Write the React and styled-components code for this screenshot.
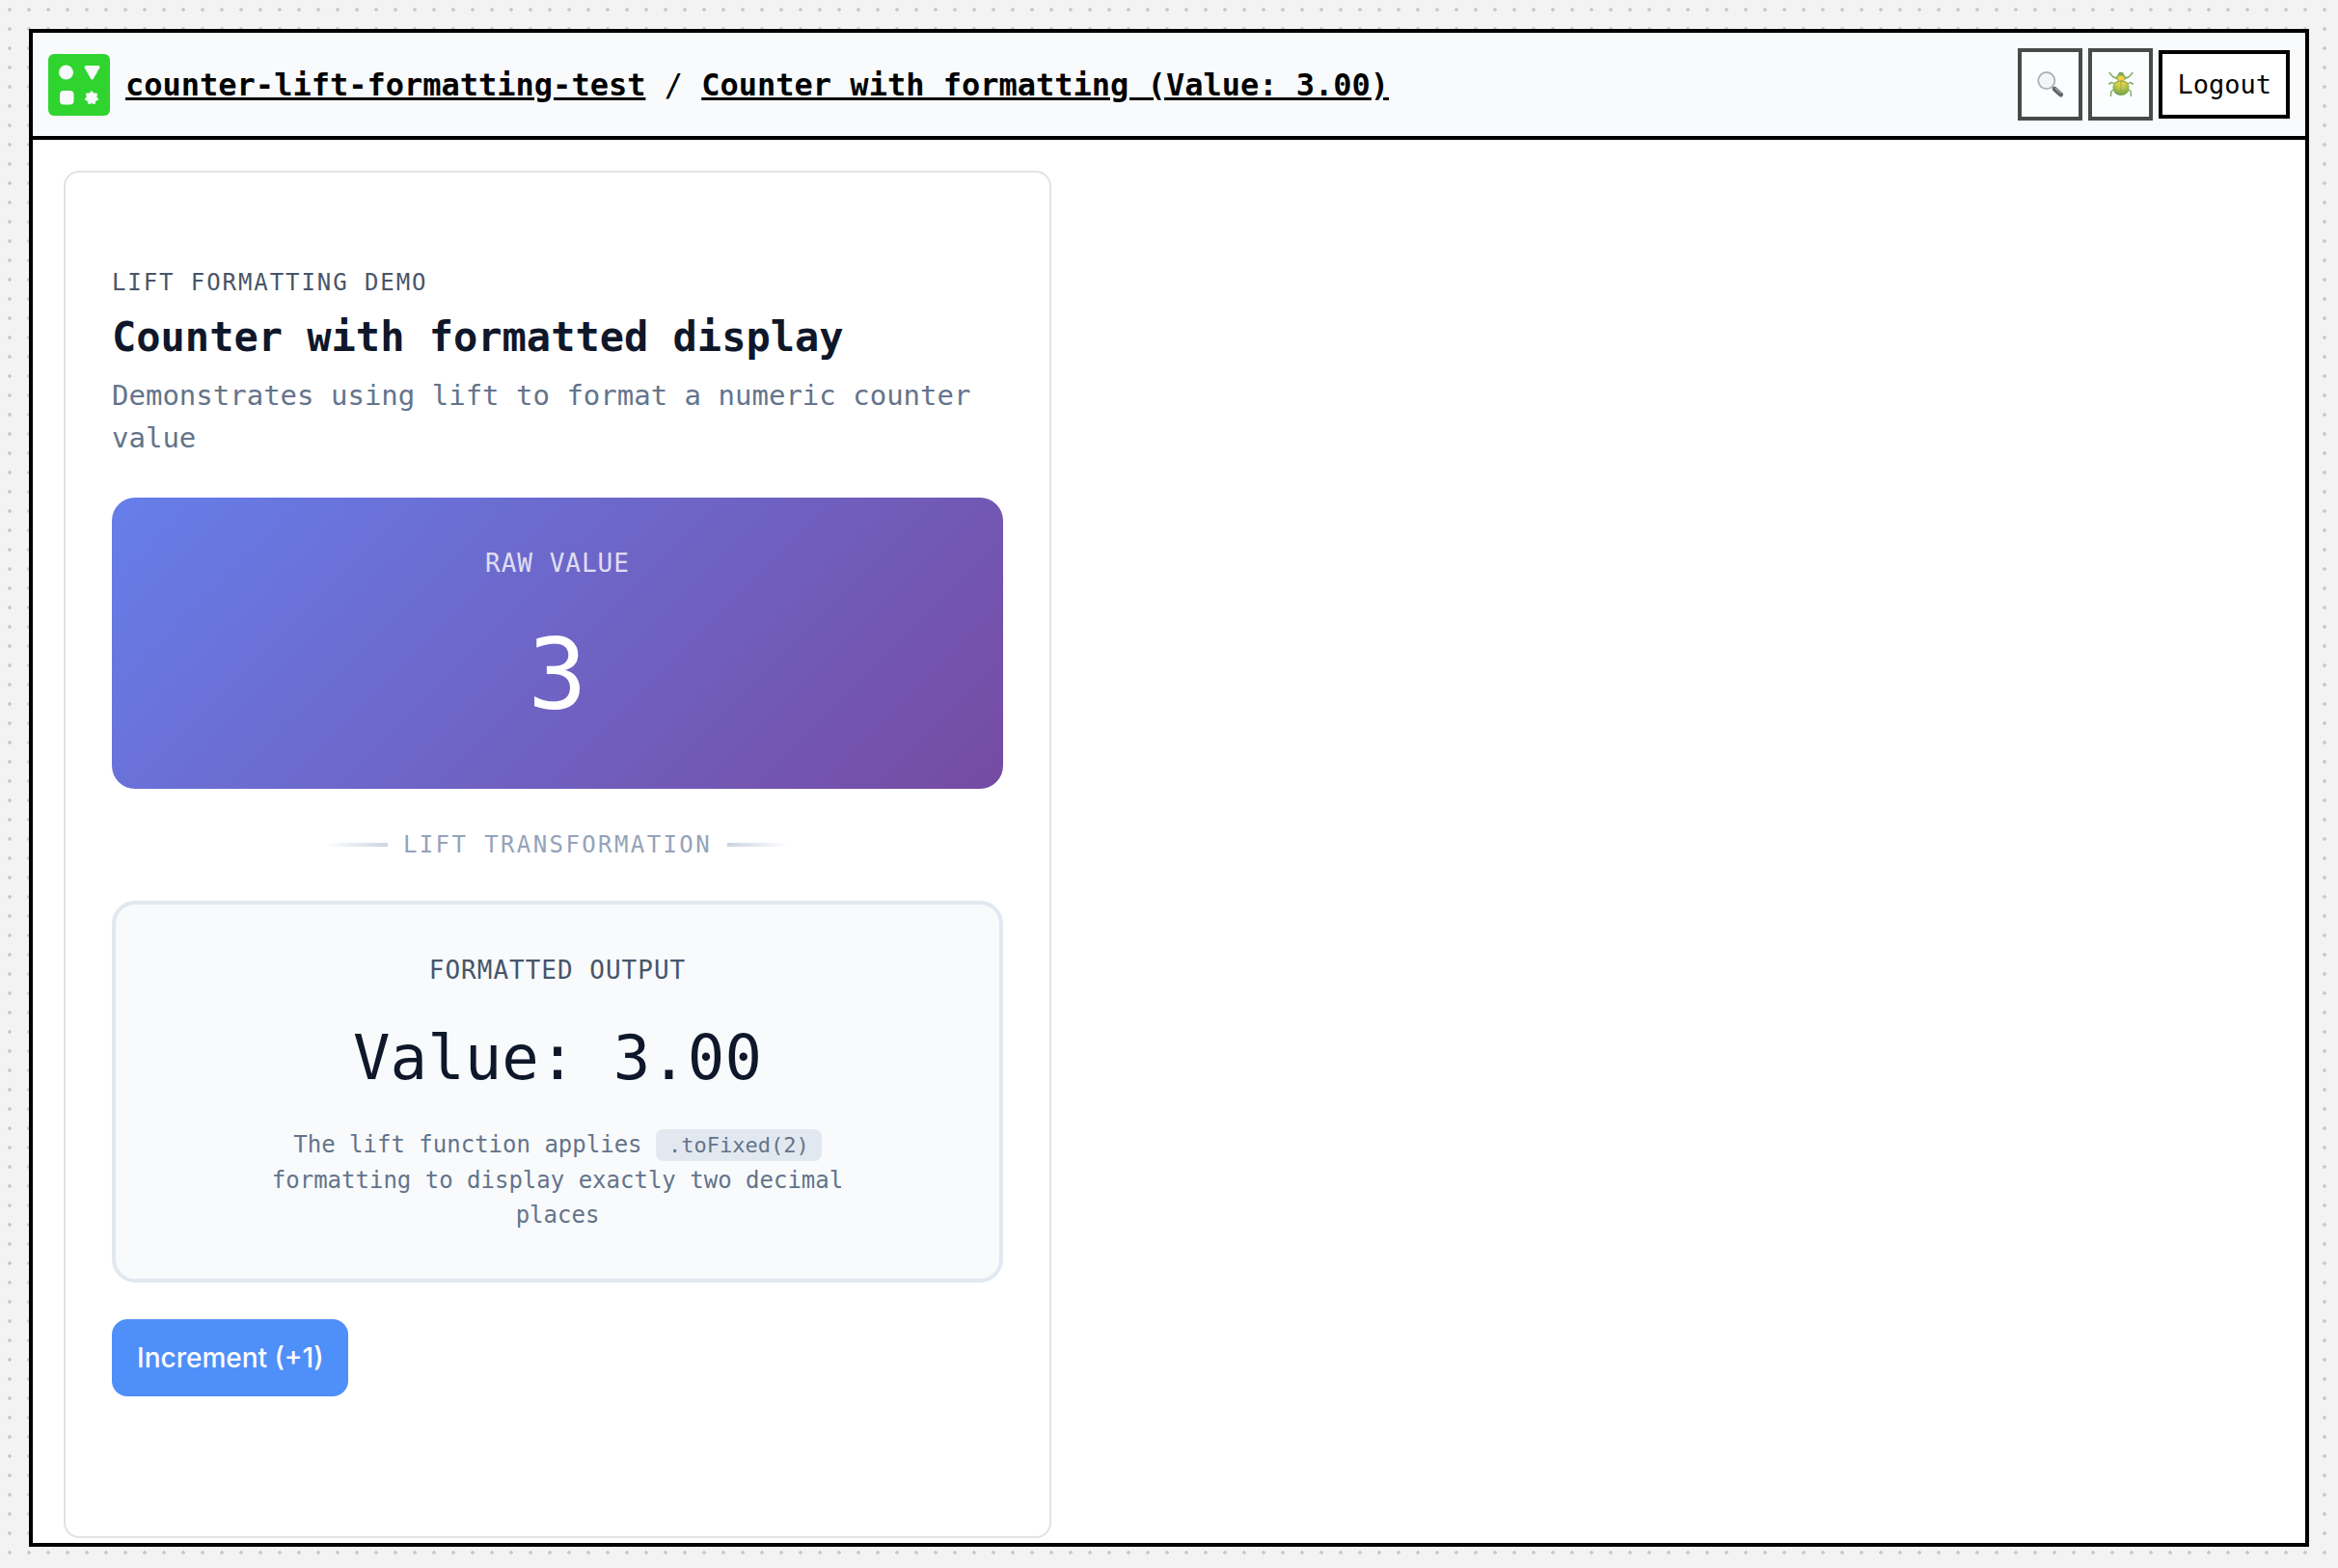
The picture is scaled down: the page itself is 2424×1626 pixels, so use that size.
import React, { useState } from "react";
import styled, { createGlobalStyle } from "styled-components";

const GlobalStyle = createGlobalStyle`
  *, *::before, *::after { box-sizing: border-box; }
  body {
    margin: 0;
    background-color: #f3f3f3;
    background-image: radial-gradient(circle at 10px 10px, #cccccc 2px, transparent 2px);
    background-size: 20px 20px;
    font-family: Menlo, "DejaVu Sans Mono", "Liberation Mono", monospace;
    color: #000;
  }
  h1, h2, p { margin: 0; }
`;

const Page = styled.div`
  display: flex;
  min-height: 100vh;
  padding: 30px 30px 22px;
`;

const Frame = styled.div`
  display: flex;
  flex: 1;
  flex-direction: column;
  border: 4px solid #000;
  background: #fff;
`;

const Header = styled.header`
  display: flex;
  align-items: center;
  justify-content: space-between;
  padding: 16px;
  border-bottom: 4px solid #000;
  background: #f8fafc;
`;

const Brand = styled.div`
  display: flex;
  align-items: center;
  gap: 16px;
`;

const LogoLink = styled.a`
  display: flex;
  svg { width: 64px; height: 64px; }
`;

const Crumbs = styled.nav`
  font-size: 32px;
  line-height: 38px;
  white-space: pre;
`;

const Crumb = styled.a`
  color: #000;
  font-weight: 700;
  text-decoration: underline;
`;

const Actions = styled.div`
  display: flex;
  align-items: center;
  gap: 6px;
`;

const HeaderButton = styled.button`
  padding: 16px 15px;
  border: 4px solid #000;
  border-radius: 0;
  background: #fff;
  color: #000;
  font-family: inherit;
  font-size: 27px;
  line-height: 31px;
`;

const IconButton = styled(HeaderButton)`
  display: flex;
  align-items: center;
  justify-content: center;
  width: 67px;
  height: 75px;
  opacity: 0.7;
  svg { width: 28px; height: 28px; flex: none; }
`;

const Content = styled.main`
  display: flex;
  flex: 1;
  padding: 32px 32px 5px;
`;

const Card = styled.section`
  display: flex;
  flex-direction: column;
  align-items: stretch;
  width: 100%;
  max-width: 1024px;
  padding: 96px 48px;
  border: 2px solid #e2e2e2;
  border-radius: 16px;
`;

const Intro = styled.header`
  display: flex;
  flex-direction: column;
  gap: 8px;
  margin-bottom: 40px;
`;

const Eyebrow = styled.p`
  color: #475569;
  font-size: 24px;
  line-height: 36px;
  letter-spacing: 0.08em;
  text-transform: uppercase;
`;

const Title = styled.h1`
  color: #0f172a;
  font-size: 42px;
  line-height: 61px;
`;

const Subtitle = styled.p`
  color: #64748b;
  font-size: 29px;
  line-height: 44px;
`;

const Panel = styled.div`
  display: flex;
  flex-direction: column;
  align-items: center;
  border-radius: 24px;
  text-align: center;
`;

const RawPanel = styled(Panel)`
  gap: 20px;
  padding: 48px 48px 42px;
  background: linear-gradient(135deg, #667eea 0%, #764ba2 100%);
  color: #fff;
`;

const OutputPanel = styled(Panel)`
  gap: 24px;
  padding: 48px;
  border: 4px solid #e2e8f0;
  background: #f8fafc;
`;

const PanelLabel = styled.p`
  color: ${(p) => p.$color};
  font-size: 26px;
  line-height: 40px;
  letter-spacing: 1px;
  text-transform: uppercase;
`;

const RawValue = styled.p`
  font-size: 102px;
  line-height: 152px;
`;

const OutputValue = styled.p`
  color: #0f172a;
  font-size: 64px;
  line-height: 95px;
`;

const Note = styled.p`
  max-width: 640px;
  color: #64748b;
  font-size: 24px;
  line-height: 36px;
`;

const Code = styled.code`
  padding: 4px 13px;
  border-radius: 8px;
  background: #e2e8f0;
  font-family: inherit;
  font-size: 22px;
`;

const Divider = styled.div`
  display: flex;
  align-items: center;
  justify-content: center;
  gap: 16px;
  padding: 40px 0;
  color: #94a3b8;
  font-size: 24px;
  line-height: 36px;
  letter-spacing: 0.1em;
  text-transform: uppercase;
`;

const Rule = styled.span`
  width: 64px;
  height: 4px;
  background: linear-gradient(${(p) => p.$to}, transparent, #cbd5e1);
`;

const IncrementButton = styled.button`
  align-self: flex-start;
  margin-top: 38px;
  padding: 22px 26px;
  border: 0;
  border-radius: 16px;
  background: #4f8ff9;
  color: #fff;
  font-family: Inter, sans-serif;
  font-size: 28px;
  font-weight: 500;
  line-height: 36px;
`;

function Logo() {
  return (
    <svg viewBox="0 0 64 64" aria-hidden="true">
      <rect width="64" height="64" rx="6" fill="#2fd42f" />
      <circle cx="18.5" cy="19" r="7.5" fill="#f8fafc" />
      <path d="M39 13.500h13L45.500 25z" fill="#f8fafc" stroke="#f8fafc" strokeWidth="3" strokeLinejoin="round" />
      <rect x="12" y="38" width="14.5" height="14.5" rx="4" fill="#f8fafc" />
      <path
        d="M45 38.500L47.200 41 50.500 41.100 49.900 44.400 51.800 47.100 48.900 48.600 48 51.800 45 50.500 42 51.800 41.100 48.600 38.200 47.100 40.100 44.400 39.500 41.100 42.800 41z"
        fill="#f8fafc"
        stroke="#f8fafc"
        strokeWidth="1"
        strokeLinejoin="round"
      />
    </svg>
  );
}

function MagnifierIcon() {
  return (
    <svg viewBox="0 0 28 28" aria-hidden="true">
      <path d="M15.500 15.500l4 4" stroke="#777" strokeWidth="2.500" />
      <path d="M18.500 18.500l6 5.500" stroke="#1e2226" strokeWidth="5" strokeLinecap="round" />
      <path d="M19 17.500l5.500 5" stroke="#7d8389" strokeWidth="1.200" strokeLinecap="round" />
      <circle cx="9.800" cy="9.600" r="8.600" fill="#f2f3f4" stroke="#87939f" strokeWidth="1.800" />
    </svg>
  );
}

function BeetleIcon() {
  return (
    <svg viewBox="0 0 28 28" aria-hidden="true">
      <defs>
        <radialGradient id="shell" cx="0.5" cy="0.2" r="0.8">
          <stop offset="0" stopColor="#f2c400" />
          <stop offset="0.4" stopColor="#a9b400" />
          <stop offset="1" stopColor="#237a00" />
        </radialGradient>
      </defs>
      <g fill="none" stroke="#458a1e" strokeWidth="1.4" strokeLinecap="round" strokeLinejoin="round">
        <path d="M10 7.500L5.500 5.500 2 1.500M18 7.500l4.500-2L26 1.500" />
        <path d="M7 13L4.500 11.500 1.500 13M21 13l2.500-1.500 3 1.500" />
        <path d="M6.500 19L4 20.500 3.500 25.500M21.500 19l2.500 1.500.5 5" />
      </g>
      <ellipse cx="14" cy="2.800" rx="2.800" ry="2" fill="#3f7d14" />
      <ellipse cx="14" cy="6.500" rx="5" ry="4" fill="#5c8a08" />
      <ellipse cx="14" cy="7" rx="3.600" ry="2.600" fill="#f0bf00" />
      <ellipse cx="14" cy="17" rx="8.600" ry="8" fill="url(#shell)" />
      <path d="M14 9.500V25M6.500 12.500Q14 7.500 21.500 12.500" fill="none" stroke="#6f7d00" strokeWidth="0.9" />
    </svg>
  );
}

export default function App() {
  const [count, setCount] = useState(3);
  const formatted = `Value: ${count.toFixed(2)}`;

  return (
    <>
      <GlobalStyle />
      <Page>
        <Frame>
          <Header>
            <Brand>
              <LogoLink href="#home" aria-label="Home">
                <Logo />
              </LogoLink>
              <Crumbs>
                <Crumb href="#space">counter-lift-formatting-test</Crumb>
                {" / "}
                <Crumb href="#counter">Counter with formatting ({formatted})</Crumb>
              </Crumbs>
            </Brand>
            <Actions>
              <IconButton type="button" aria-label="Search">
                <MagnifierIcon />
              </IconButton>
              <IconButton type="button" aria-label="Debug">
                <BeetleIcon />
              </IconButton>
              <HeaderButton type="button">Logout</HeaderButton>
            </Actions>
          </Header>
          <Content>
            <Card>
              <Intro>
                <Eyebrow>Lift formatting demo</Eyebrow>
                <Title>Counter with formatted display</Title>
                <Subtitle>Demonstrates using lift to format a numeric counter value</Subtitle>
              </Intro>
              <RawPanel>
                <PanelLabel $color="rgba(255, 255, 255, 0.8)">Raw value</PanelLabel>
                <RawValue>{count}</RawValue>
              </RawPanel>
              <Divider>
                <Rule $to="to right" />
                <span>Lift transformation</span>
                <Rule $to="to left" />
              </Divider>
              <OutputPanel>
                <PanelLabel $color="#475569">Formatted output</PanelLabel>
                <OutputValue>{formatted}</OutputValue>
                <Note>
                  The lift function applies <Code>.toFixed(2)</Code> formatting to display exactly two decimal places
                </Note>
              </OutputPanel>
              <IncrementButton type="button" onClick={() => setCount((c) => c + 1)}>
                Increment (+1)
              </IncrementButton>
            </Card>
          </Content>
        </Frame>
      </Page>
    </>
  );
}
